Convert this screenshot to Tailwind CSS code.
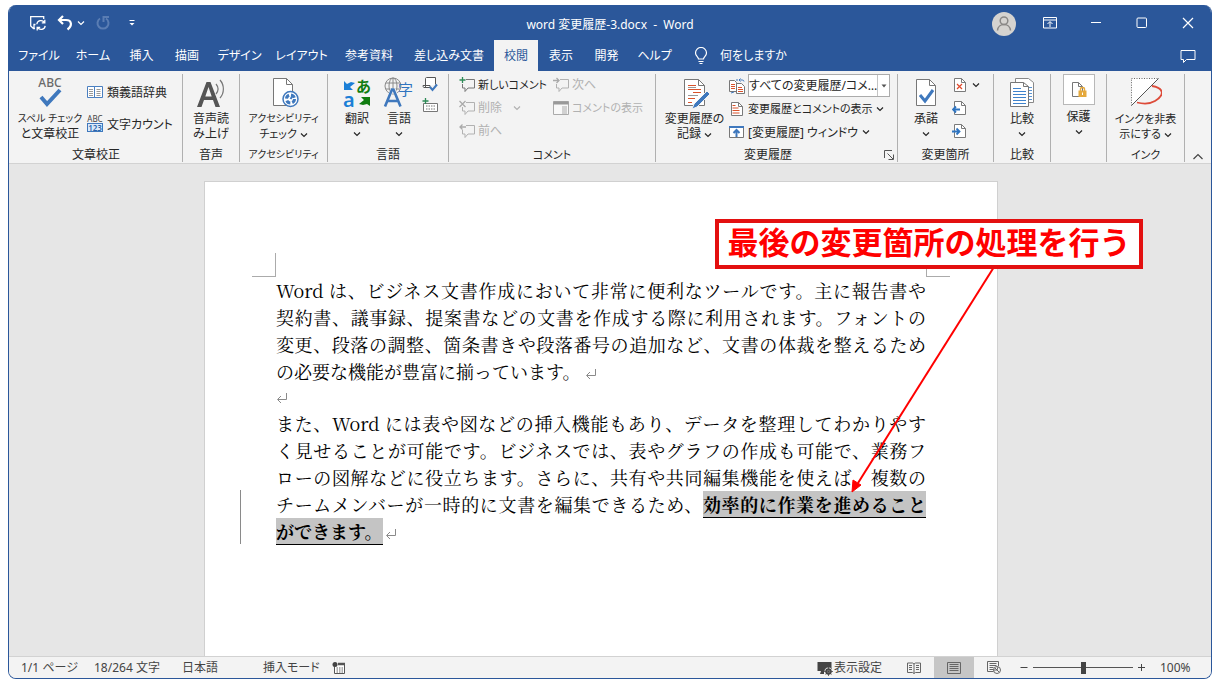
<!DOCTYPE html>
<html lang="ja">
<head>
<meta charset="utf-8">
<title>word 変更履歴-3.docx - Word</title>
<script src="https://cdn.jsdelivr.net/npm/@tailwindcss/browser@4"></script>
</head>
<body class="bg-white">
<svg class="hidden">
  <symbol id="chev" viewBox="0 0 8 8"><path d="M1 2.500 4 5.500l3-3" fill="none" stroke="currentColor" stroke-width="1.200"/></symbol>
  <symbol id="ret" viewBox="0 0 12 12"><path d="M10.500 1v6.500H2M5 4 1.500 7.500 5 11" fill="none" stroke="#8a8a8a" stroke-width="1"/></symbol>
  <symbol id="bubble" viewBox="0 0 16 16"><path d="M7 2.500h8.500v8.500H9l-3 3.500V11H3.500V7" fill="none" stroke="currentColor" stroke-width="1"/></symbol>
  <symbol id="doc" viewBox="0 0 14 16"><path d="M1.500 1.500h7l4 4v9h-11z" fill="#fff" stroke="#7a7a7a"/><path d="M8.500 1.500v4h4" fill="none" stroke="#7a7a7a"/></symbol>
</svg>

<div class="h-screen px-2 pt-[5px] pb-[7px] font-['Noto_Sans','Noto_Sans_CJK_JP',sans-serif] text-xs leading-[15px] text-[#262626] [font-feature-settings:'palt']">
<div class="relative flex h-full flex-col overflow-hidden rounded-lg border-x border-b border-[#2b579a] bg-[#e6e6e6]">

  <header class="shrink-0 bg-[#2b579a] text-white">
    <div class="grid h-[35px] grid-cols-[1fr_auto_1fr] items-center">
      <div class="flex items-center pl-5">
        <button aria-label="上書き保存" class="w-[18px]"><svg class="size-[18px]" viewBox="0 0 18 18" fill="none" stroke="#fff" stroke-width="1.300"><path d="M6 14.500H4.500L1.700 12V2.700h13V5M5 14v-3.500h1.500"/><path d="M7.800 10.300a4.200 4.200 0 0 1 7.700-1.800M16.200 11.800a4.200 4.200 0 0 1-7.700 1.700M15.800 5.800v3h-3M8.200 16.500v-3h3"/></svg></button>
        <button aria-label="元に戻す" class="ml-2.5 w-4"><svg class="h-[18px] w-4" viewBox="0 0 16 18" fill="none" stroke="#fff" stroke-width="2.200"><path d="M6 2 2 6l4 4M2.500 6H9c6 0 6.500 6 1.500 9.500"/></svg></button>
        <button aria-label="元に戻すの一覧" class="ml-1 w-2"><svg class="size-2"><use href="#chev"/></svg></button>
        <button aria-label="やり直し" disabled class="ml-2.5 w-4 text-[#5a7db3]"><svg class="h-[18px] w-4" viewBox="0 0 16 18" fill="none" stroke="currentColor" stroke-width="2"><path d="M5 4.500a5.500 5.500 0 1 0 6 0M8.500 8V3H14"/></svg></button>
        <button aria-label="クイック アクセスのカスタマイズ" class="ml-[17px] w-2"><svg class="size-2" viewBox="0 0 8 8"><path d="M1.500 1.500h5" stroke="#fff"/><path d="M1.500 4h5L4 6.500z" fill="#fff"/></svg></button>
      </div>
      <h1 class="whitespace-pre pt-1">word 変更履歴-3.docx  -  Word</h1>
      <div class="flex items-center justify-end">
        <button aria-label="アカウント" class="flex w-[46px] justify-center"><svg class="mt-0.5 size-6" viewBox="0 0 24 24"><circle cx="12" cy="12" r="12" fill="#d5d3d0"/><g fill="none" stroke="#8a8886" stroke-width="1.500"><circle cx="12" cy="8.800" r="3.800"/><path d="M5.500 18.500c.5-8 12.500-8 13 0"/></g></svg></button>
        <button aria-label="リボンの表示オプション" class="flex w-[46px] justify-center"><svg class="h-3 w-3.5" viewBox="0 0 14 12" fill="none" stroke="#fff"><path d="M.5.500h13v10.500H.5zM.5 3h13M7 10V5M4.500 7 7 4.500 9.500 7"/></svg></button>
        <button aria-label="最小化" class="flex w-[46px] justify-center"><svg class="h-3 w-2.5" viewBox="0 0 10 12"><path d="M0 5.500h10" stroke="#fff"/></svg></button>
        <button aria-label="最大化" class="flex w-[46px] justify-center"><svg class="size-3" viewBox="0 0 12 12"><rect x="1" y="1" width="9.500" height="9.500" rx="1" fill="none" stroke="#fff"/></svg></button>
        <button aria-label="閉じる" class="flex w-[46px] justify-center"><svg class="size-3" viewBox="0 0 12 12"><path d="m1 1 10 10M11 1 1 11" stroke="#fff" stroke-width="1.200"/></svg></button>
      </div>
    </div>
    <nav class="flex h-[31px] items-stretch pl-0.5">
      <button class="w-14">ファイル</button>
      <button class="w-[52px]">ホーム</button>
      <button class="w-[45px]">挿入</button>
      <button class="w-[46px]">描画</button>
      <button class="w-[59px]">デザイン</button>
      <button class="w-[65px]">レイアウト</button>
      <button class="w-[70px]">参考資料</button>
      <button class="w-[90px]">差し込み文書</button>
      <button class="w-[44px] bg-[#f3f3f3] text-[#2b579a]">校閲</button>
      <button class="w-[46px]">表示</button>
      <button class="w-[45px]">開発</button>
      <button class="w-[51px]">ヘルプ</button>
      <button class="ml-3.5 flex items-center gap-3"><svg class="h-[18px] w-3.5" viewBox="0 0 14 18" fill="none" stroke="#fff" stroke-width="1.200"><path d="M4.500 12c0-2-3-3-3-6a5.500 5.500 0 0 1 11 0c0 3-3 4-3 6zM4.500 14.500h5M5.500 16.500h3"/></svg>何をしますか</button>
      <button aria-label="コメント" class="mr-[15px] ml-auto"><svg class="h-3.5 w-4" viewBox="0 0 16 14" fill="none" stroke="#fff"><path d="M1 1.500h14v9H6.500l-3 3v-3H1z"/></svg></button>
    </nav>
  </header>

  <section aria-label="校閲リボン" class="flex h-[93px] shrink-0 border-b border-[#d2d2d2] bg-[#f3f3f3] *:pt-[3px]">
    <!-- 文章校正 -->
    <div class="flex w-[173px] flex-col">
      <div class="flex h-[73px] items-start">
        <button class="w-[78px] pt-[3px] pl-1"><svg class="mx-auto mb-0.5 size-8 overflow-visible" viewBox="0 0 32 32"><text x="16" y="10" text-anchor="middle" font-family="Noto Sans" font-size="12" font-weight="500" fill="#6a6a6a">ABC</text><path d="m7 20 6 7L26 13" fill="none" stroke="#3f78bd" stroke-width="4"/></svg><span class="block text-[10px] leading-[15px] whitespace-nowrap">スペル チェック</span>と文章校正</button>
        <div class="flex flex-col gap-4 pt-2.5">
          <button class="flex h-4 items-center gap-1 whitespace-nowrap"><svg class="size-4 shrink-0" viewBox="0 0 16 16"><path d="M.5 2.500h7v11h-7zM7.500 2.500h8v11h-8z" fill="#fff" stroke="#4a7fc0"/><path d="M2 5.500h4M2 7.500h4M2 9.500h4M9.500 5.500h4M9.500 7.500h4M9.500 9.500h4M2 11.500h4M9.500 11.500h4" stroke="#999"/></svg>類義語辞典</button>
          <button class="flex h-4 items-center gap-1 whitespace-nowrap"><svg class="size-4 shrink-0 overflow-visible" viewBox="0 0 16 16"><text x="8" y="6" text-anchor="middle" font-family="Noto Sans" font-size="8" fill="#444">ABC</text><rect x=".5" y="7.500" width="15" height="8" fill="#dceafa" stroke="#3f78bd"/><text x="8" y="14.500" text-anchor="middle" font-family="Noto Sans" font-size="8" font-weight="600" fill="#2b66ad">123</text></svg>文字カウント</button>
        </div>
      </div>
      <div class="pl-px text-center">文章校正</div>
    </div>
    <!-- 音声 -->
    <div class="flex w-[57px] flex-col">
      <div class="h-[73px] border-l border-[#b0b0b0]"><button class="w-full pt-[3px]"><svg class="mx-auto mb-0.5 size-8" viewBox="0 0 32 32"><path d="m2 30 9.500-25h4L25 30h-4.500l-2.500-7H9l-2.500 7zm8.300-10.500h6.400L13.500 10z" fill="#555"/><path d="M21 7c2.500 3 2.500 7 0 10M25 3c4.500 5 4.500 13 0 18" fill="none" stroke="#777" stroke-width="1.200"/></svg>音声読<br>み上げ</button></div>
      <div class="border-l border-[#b0b0b0] text-center">音声</div>
    </div>
    <!-- アクセシビリティ -->
    <div class="flex w-[88px] flex-col">
      <div class="h-[73px] border-l border-[#b0b0b0]"><button class="w-full pt-[3px] whitespace-nowrap"><svg class="mx-auto mb-0.5 size-8" viewBox="0 0 32 32"><path d="M5.500 1.500h13l6 6v21h-19z" fill="#fff" stroke="#777"/><path d="M18.500 1.500v6h6" fill="none" stroke="#777"/><circle cx="22.500" cy="22" r="7.500" fill="#fff" stroke="#3f78bd" stroke-width="1.500"/><circle cx="22.500" cy="22" r="4" fill="none" stroke="#3f78bd" stroke-width="3" stroke-dasharray="4.300 2"/><path d="m22.500 22 2-3" stroke="#3f78bd" stroke-width="2"/></svg><span class="block text-[10px] leading-[15px]">アクセシビリティ</span><span class="block text-[11px] leading-[15px]">チェック <svg class="inline size-2"><use href="#chev"/></svg></span></button></div>
      <div class="border-l border-[#b0b0b0] text-center text-[10px] leading-[15px] whitespace-nowrap">アクセシビリティ</div>
    </div>
    <!-- 言語 -->
    <div class="flex w-[121px] flex-col">
      <div class="flex h-[73px] border-l border-[#b0b0b0] pl-2">
        <button class="flex w-[42px] flex-col items-center pt-[3px]"><svg class="mb-0.5 size-8 overflow-visible" viewBox="0 0 32 32"><text x="15" y="15" font-family="Noto Sans CJK JP" font-size="15" font-weight="700" fill="#107c10">あ</text><text x="2" y="30" font-family="Noto Sans" font-size="20" font-weight="600" fill="#1b7fd6">a</text><path d="M3 4v9h9l-3-3 5-4-4-1-4 2z" fill="#1b7fd6"/><path d="M29 29v-9h-9l3 3-5 4 4 1 4-1z" fill="#107c10"/></svg>翻訳<svg class="mt-1 size-2"><use href="#chev"/></svg></button>
        <button class="flex w-[42px] flex-col items-center pt-[3px]"><svg class="mb-0.5 size-8 overflow-visible" viewBox="0 0 32 32"><g fill="none" stroke="#8a8a8a"><circle cx="10" cy="9" r="8"/><ellipse cx="10" cy="9" rx="4" ry="8"/><path d="M10 1v16M3 6h14M3 12h14"/></g><text x="15" y="18" font-family="Noto Sans CJK JP" font-size="15" fill="#2f74c0">字</text><path d="m2 30 7-17h2l7 17M5 24h10" fill="none" stroke="#f3f3f3" stroke-width="4"/><path d="m2 29.500 7-17h1.500l7 17M5 24h10" fill="none" stroke="#3f78bd" stroke-width="2.600"/></svg>言語<svg class="mt-1 size-2"><use href="#chev"/></svg></button>
        <div class="flex flex-col gap-1.5 pt-0.5 pl-0.5">
          <button aria-label="言語の設定"><svg class="size-4" viewBox="0 0 16 16"><path d="M3.500 11V2.500c0-1 1-1 1-1h9v7M1 9.500h7v2H2c-1 0-1-2-1-2z" fill="#fff" stroke="#555"/><path d="m8 11 2.500 3L15 8.500" fill="none" stroke="#3f78bd" stroke-width="2"/></svg></button>
          <button aria-label="入力方式"><svg class="size-4" viewBox="0 0 16 16"><path d="M1.500 5.500h14v8h-14z" fill="#fff" stroke="#777"/><path d="M4 8h10M4 11h9" stroke="#777" stroke-dasharray="1.500 1"/><path d="M3.500 0v6M.5 3h6" stroke="#2e8b57" stroke-width="1.300"/></svg></button>
        </div>
      </div>
      <div class="border-l border-[#b0b0b0] text-center">言語</div>
    </div>
    <!-- コメント -->
    <div class="flex w-[207px] flex-col">
      <div class="flex h-[73px] gap-2.5 border-l border-[#b0b0b0] pl-2.5">
        <div class="flex w-[84px] flex-col items-start gap-2 pt-[3px] text-[#b1b1b1] *:flex *:h-[15px] *:items-center *:gap-[3px] *:whitespace-nowrap">
          <button class="text-[11px] text-[#262626]"><svg class="size-4 text-[#777]"><use href="#bubble"/><path d="M3.500 0v6M.5 3h6" stroke="#2e8b57" stroke-width="1.300"/></svg>新しいコメント</button>
          <button disabled><svg class="size-4"><use href="#bubble"/><path d="m.5 1 6 6M6.500 1l-6 6" stroke="#aaa" stroke-width="1.300"/></svg>削除<svg class="ml-2 size-2"><use href="#chev"/></svg></button>
          <button disabled><svg class="size-4"><use href="#bubble"/><path d="M7 4H1M3.500 1.500 1 4l2.500 2.500" fill="none" stroke="#aaa" stroke-width="1.300"/></svg>前へ</button>
        </div>
        <div class="flex flex-col items-start gap-2 pt-[3px] text-[#b1b1b1] *:flex *:h-[15px] *:items-center *:gap-[3px] *:whitespace-nowrap">
          <button disabled><svg class="size-4"><use href="#bubble"/><path d="M0 3.500h6M3.500 1 6 3.500 3.500 6" fill="none" stroke="#aaa" stroke-width="1.300"/></svg>次へ</button>
          <button disabled class="text-[11px]"><svg class="size-4" viewBox="0 0 16 16"><path d="M.5 1.500h15v13H.5z" fill="#f8f8f8" stroke="#aaa"/><path d="M.5 3h15" stroke="#999" stroke-width="3"/><path d="M9 7h5M9 9h5M9 11h5M9 13h5" stroke="#aaa"/></svg>コメントの表示</button>
        </div>
      </div>
      <div class="border-l border-[#b0b0b0] text-center text-[11px] leading-[15px]">コメント</div>
    </div>
    <!-- 変更履歴 -->
    <div class="flex w-[242px] flex-col">
      <div class="flex h-[73px] items-start border-l border-[#b0b0b0]">
        <button class="w-[73px] pt-[3px] pl-1 whitespace-nowrap"><svg class="mx-auto mb-0.5 size-8" viewBox="0 0 32 32"><path d="M5.500 2.500h14l6 6v20h-20z" fill="#fff" stroke="#777"/><path d="M19.500 2.500v6h6" fill="none" stroke="#777"/><path d="M9 8.500h8M9 12.500h13M14 15.500h8M9 21.500h7M9 25.500h4" stroke="#d9532c"/><path d="M9 10.500h8M9 18.500h10" stroke="#999"/><path d="m15 27 13-13 3 3-13 13-5 2z" fill="#3f78bd" stroke="#f3f3f3"/></svg>変更履歴の<br>記録 <svg class="inline size-2"><use href="#chev"/></svg></button>
        <div class="flex min-w-0 flex-1 flex-col">
          <div class="flex h-[23px] items-center gap-[3px]">
            <svg class="size-4 shrink-0" viewBox="0 0 16 16"><path d="M.5 2.500h5l2 2v9h-7z" fill="#fff" stroke="#777"/><path d="M7.500 5.500h5l3 3v7h-8z" fill="#fff" stroke="#777"/><path d="M2 6.500h4M2 8.500h4M2 10.500h4M9 9.500h4M9 11.500h5M9 13.500h5" stroke="#d9532c"/><path d="M7 2h2M15 3.500c0-2-3-1.500-5-1.500M11.500.500 10 2l1.500 1.500M2 15l3-1" fill="none" stroke="#3f78bd"/></svg>
            <label class="sr-only" for="markup">変更内容の表示</label>
            <div class="relative w-[142px]">
              <select id="markup" class="block h-[23px] w-full appearance-none border border-[#ababab] bg-white pr-2 pl-0 leading-[21px]"><option>すべての変更履歴/コメ…</option></select>
              <span class="pointer-events-none absolute inset-y-px right-px flex w-3 items-center justify-center border-l border-[#c4c4c4]"><svg class="size-[6px]" viewBox="0 0 6 6"><path d="M.5 1.500h5L3 4.500z" fill="#555"/></svg></span>
            </div>
          </div>
          <button class="flex h-[23px] items-center gap-[3px] text-[11px] whitespace-nowrap"><svg class="size-4"><use href="#doc"/><path d="M3.500 4.500h3M3.500 7h6M3.500 9.500h7M3.500 12h7" stroke="#d9532c"/></svg>変更履歴とコメントの表示<svg class="size-2"><use href="#chev"/></svg></button>
          <button class="flex h-6 items-center gap-[3px] whitespace-nowrap"><svg class="size-4" viewBox="0 0 16 16"><path d="M.5 2.500h14v11H.5z" fill="#fff" stroke="#777"/><path d="M0 3h15" stroke="#3f78bd" stroke-width="2"/><path d="M7.500 13V6.500M4.500 9l3-3 3 3" fill="none" stroke="#3f78bd" stroke-width="2"/></svg>[変更履歴] ウィンドウ<svg class="ml-px size-2"><use href="#chev"/></svg></button>
        </div>
      </div>
      <div class="flex items-center border-l border-[#b0b0b0]"><span class="flex-1 pr-1 text-center">変更履歴</span><button aria-label="変更履歴オプション" class="mr-[3px]"><svg class="size-2.5" viewBox="0 0 10 10" fill="none" stroke="#555"><path d="M.5 8V.500H8M3.500 3.500 9 9M9.500 4.500v5h-5"/></svg></button></div>
    </div>
    <!-- 変更箇所 -->
    <div class="flex w-[96px] flex-col">
      <div class="flex h-[73px] border-l border-[#b0b0b0]">
        <button class="flex w-[54px] flex-col items-center pt-[3px] pl-0.5"><svg class="mb-0.5 size-8" viewBox="0 0 32 32"><path d="M6.500 2.500h13l6 6v20h-19z" fill="#fff" stroke="#777"/><path d="M19.500 2.500v6h6" fill="none" stroke="#777"/><path d="m10 18 5 6 8-11" fill="none" stroke="#3f78bd" stroke-width="3"/></svg>承諾<svg class="mt-1 size-2"><use href="#chev"/></svg></button>
        <div class="flex flex-col gap-[7px] pt-[3px]">
          <button aria-label="元に戻して次へ進む" class="flex items-center gap-1"><svg class="size-4"><use href="#doc"/><path d="m5 7 5 5M10 7l-5 5" stroke="#e0492c" stroke-width="1.200"/></svg><svg class="size-2"><use href="#chev"/></svg></button>
          <button aria-label="前の変更箇所"><svg class="size-4"><use href="#doc"/><path d="M8 9.500H1M4 6.500l-3 3 3 3" fill="none" stroke="#2f74c0" stroke-width="1.800"/></svg></button>
          <button aria-label="次の変更箇所"><svg class="size-4"><use href="#doc"/><path d="M0 8.500h7M4.500 5.500l3 3-3 3" fill="none" stroke="#2f74c0" stroke-width="1.800"/></svg></button>
        </div>
      </div>
      <div class="border-l border-[#b0b0b0] text-center">変更箇所</div>
    </div>
    <!-- 比較 -->
    <div class="flex w-[57px] flex-col">
      <div class="h-[73px] border-l border-[#b0b0b0]"><button class="flex w-full flex-col items-center pt-[3px]"><svg class="mb-0.5 size-8" viewBox="0 0 32 32"><path d="M9.500 1.500h13l5 4v20h-18z" fill="#fff" stroke="#888"/><path d="M22 10.500h4M22 13.500h4M22 16.500h4M22 19.500h4M22 22.500h4" stroke="#5b94d2"/><path d="M4.500 5.500h13l5 4v20h-18z" fill="#fff" stroke="#777"/><path d="M17.500 5.500v4h5" fill="none" stroke="#777"/><path d="M7 11.500h8M7 14.500h13M7 17.500h13M7 20.500h13M7 23.500h13M7 26.500h13" stroke="#3f83cc"/></svg>比較<svg class="mt-1 size-2"><use href="#chev"/></svg></button></div>
      <div class="border-l border-[#b0b0b0] text-center">比較</div>
    </div>
    <!-- 保護 -->
    <div class="flex w-14 flex-col">
      <div class="h-[88px] border-l border-[#b0b0b0]"><button class="flex w-full flex-col items-center"><span class="mb-1 flex h-[31px] w-8 items-center justify-center border border-[#b8b8b8] bg-white"><svg class="size-4" viewBox="0 0 16 16"><path d="M1.500.500h6l4 4v10h-10z" fill="#fff" stroke="#777"/><path d="M7.500.500v4h4" fill="none" stroke="#777"/><path d="M7.500 8.500h8v6.500h-8z" fill="#e5a93d"/><path d="M9.500 9V7c0-2 4-2 4 0v2" fill="none" stroke="#e5a93d" stroke-width="1.400"/><path d="M11.500 10.500v2.500" stroke="#fff"/></svg></span>保護<svg class="mt-1 size-2"><use href="#chev"/></svg></button></div>
    </div>
    <!-- インク -->
    <div class="flex w-[78px] flex-col">
      <div class="h-[73px] border-l border-[#b0b0b0]"><button class="w-full pt-[3px] text-[11px] leading-[15px] whitespace-nowrap"><svg class="mx-auto mb-0.5 size-8" viewBox="0 0 32 32"><path d="M1.500 1.500h27L1.500 28.500z" fill="#fff" stroke="#666" stroke-dasharray="1 1.500"/><path d="M28.500 1.500 1.500 28.500" stroke="#555"/><path d="M22 9c12 2 13 9 3 15-5 3-12 3-18 1.500" fill="none" stroke="#dd4b39" stroke-width="1.800"/></svg>インクを非表<br>示にする <svg class="inline size-2"><use href="#chev"/></svg></button></div>
      <div class="border-l border-[#b0b0b0] text-center text-[11px] leading-[15px]">インク</div>
    </div>
    <div class="flex flex-1 flex-col"><div class="flex h-[88px] items-end justify-center border-l border-[#b0b0b0]"><button aria-label="リボンを折りたたむ"><svg class="h-2.5 w-3" viewBox="0 0 12 10"><path d="m1.500 7 4.500-4.500L10.500 7" fill="none" stroke="#444" stroke-width="1.200"/></svg></button></div></div>
  </section>

  <main class="flex min-h-0 flex-1 justify-center overflow-hidden pt-[17px] pr-[18px]">
    <article class="relative w-[794px] border border-b-0 border-[#d0d0d0] bg-white px-[71px] pt-[71px] font-['Noto_Serif_CJK_JP','Noto_Sans_CJK_JP',serif] text-lg leading-[27px] text-black [font-feature-settings:normal]">
      <div class="-mx-6 flex justify-between *:size-6 *:border-b *:border-[#ababab]"><span class="border-r"></span><span class="border-l"></span></div>
      <p class="*:block *:whitespace-nowrap *:[text-align-last:justify]">
        <span>Word は、ビジネス文書作成において非常に便利なツールです。主に報告書や</span>
        <span>契約書、議事録、提案書などの文書を作成する際に利用されます。フォントの</span>
        <span>変更、段落の調整、箇条書きや段落番号の追加など、文書の体裁を整えるため</span>
        の必要な機能が豊富に揃っています。<svg class="ml-1 !inline size-3"><use href="#ret"/></svg>
      </p>
      <p class="flex h-[25px] items-center"><svg class="size-3"><use href="#ret"/></svg></p>
      <p class="*:block *:whitespace-nowrap">
        <span class="[text-align-last:justify]">また、Word には表や図などの挿入機能もあり、データを整理してわかりやす</span>
        <span class="[text-align-last:justify]">く見せることが可能です。ビジネスでは、表やグラフの作成も可能で、業務フ</span>
        <span class="[text-align-last:justify]">ローの図解などに役立ちます。さらに、共有や共同編集機能を使えば、複数の</span>
        <span class="[text-align-last:justify]">チームメンバーが一時的に文書を編集できるため、<b class="border-b border-black bg-[#c4c4c4] font-bold">効率的に作業を進めること</b></span>
        <span><b class="border-b border-black bg-[#c4c4c4] font-bold">ができます。</b><svg class="ml-0.5 inline size-3"><use href="#ret"/></svg></span>
      </p>
      <i class="absolute top-[308px] left-[35px] h-[54px] w-px bg-[#8a8a8a]"></i>
    </article>
  </main>

  <footer class="flex h-[22px] shrink-0 items-center border-t border-[#d2d2d2] bg-[#f3f3f3] pl-3 whitespace-nowrap text-[#444]">
    <span class="w-[73px]">1/1 ページ</span>
    <span class="w-[88px]">18/264 文字</span>
    <span class="w-[81px]">日本語</span>
    <span class="w-[69px]">挿入モード</span>
    <button aria-label="マクロの記録"><svg class="h-3 w-3.5" viewBox="0 0 14 12"><path d="M2.500 3v8.500h10V1.500H6" fill="#fff" stroke="#555"/><path d="M6 2h7" stroke="#555" stroke-width="2.500"/><circle cx="3" cy="2.500" r="2.500" fill="#444"/><path d="M4.500 6h7M4.500 8h7M4.500 10h7" stroke="#666" stroke-dasharray="1.500 1"/></svg></button>
    <div class="ml-auto flex h-full items-center">
      <button class="mr-3 flex items-center gap-px"><svg class="size-4" viewBox="0 0 16 16"><path d="M.5 2h14v9H.5zM4 11h3v3H3z" fill="#444"/><circle cx="11.500" cy="11.500" r="4" fill="#f3f3f3"/><circle cx="11.500" cy="11.500" r="2.500" fill="none" stroke="#444" stroke-width="1.500"/><path d="M11.500 7v9M7 11.500h9M8.500 8.500l6 6M14.500 8.500l-6 6" stroke="#444" stroke-width=".8"/></svg>表示設定</button>
      <button aria-label="閲覧モード" class="flex w-10 justify-center"><svg class="h-3 w-3.5" viewBox="0 0 14 12" fill="none" stroke="#666"><path d="M.5 1h5L7 2l1.500-1h5v9.500h-5L7 11.500l-1.500-1h-5zM7 2v9.500M2 3.500h3M2 5.500h3M2 7.500h3M9 3.500h3M9 5.500h3M9 7.500h3"/></svg></button>
      <button aria-label="印刷レイアウト" class="flex h-full w-10 items-center justify-center bg-[#c6c6c6]"><svg class="h-3 w-3.5" viewBox="0 0 14 12" fill="none" stroke="#666"><path d="M.5.500h13v11H.5zM2.500 2.500h9M2.500 4.500h9M2.500 6.500h9M2.500 8.500h9"/></svg></button>
      <button aria-label="Web レイアウト" class="flex w-10 justify-center"><svg class="h-[13px] w-3.5" viewBox="0 0 14 13" fill="none" stroke="#666"><path d="M11.500 5V.500H.5v10h6M2.500 2.500h7M2.500 4.500h7M2.500 6.500h4M2.500 8.500h4"/><circle cx="10" cy="9" r="3.500"/><path d="M8 7l4 4M7 9h3l1-3" /></svg></button>
      <button aria-label="縮小" class="ml-1 w-3"><svg class="mx-auto size-2" viewBox="0 0 8 8"><path d="M.5 3.500h7" stroke="#444"/></svg></button>
      <input type="range" aria-label="ズーム" min="0" max="100" value="50" class="mx-[3px] h-3 w-[100px] appearance-none bg-[linear-gradient(#555,#555)] bg-[length:100%_1px] bg-center bg-no-repeat [&::-webkit-slider-thumb]:h-3 [&::-webkit-slider-thumb]:w-[5px] [&::-webkit-slider-thumb]:appearance-none [&::-webkit-slider-thumb]:bg-[#444]">
      <button aria-label="拡大" class="w-3"><svg class="mx-auto size-2" viewBox="0 0 8 8"><path d="M0 3.500h7M3.500 0v7" stroke="#444"/></svg></button>
      <span class="w-[63px] pl-3">100%</span>
    </div>
  </footer>

  <!-- 注釈 -->
  <svg class="pointer-events-none absolute top-[262px] left-[836px] h-[230px] w-[160px]" viewBox="0 0 160 230"><path d="M149 0 13 216" stroke="#f00" stroke-width="2"/><path d="m7 225 1-12 8 5z" fill="#f00" stroke="#f00"/></svg>
  <div class="absolute top-[214px] left-[706px] flex h-[50px] w-[428px] items-center justify-center border-4 border-[#e31010] bg-white pb-1.5 font-['Noto_Sans_CJK_JP',sans-serif] text-[31px] leading-10 font-bold whitespace-nowrap text-[#f00] [font-feature-settings:normal]">最後の変更箇所の処理を行う</div>
</div>
</div>
</body>
</html>
